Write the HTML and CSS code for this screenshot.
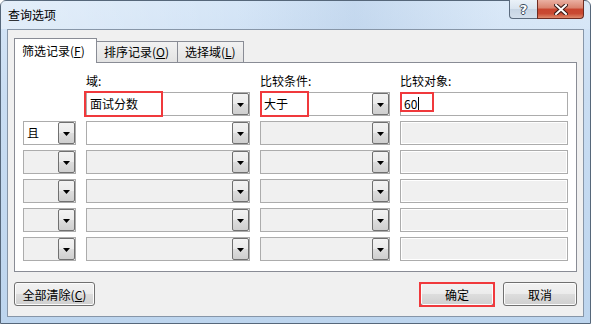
FILE: index.html
```html
<!DOCTYPE html>
<html lang="zh-CN">
<head>
<meta charset="UTF-8" />
<title>查询选项</title>
<link rel="stylesheet" href="styles.css">
</head>
<body>

<div class="window">
  <div class="titlebar">
    <span class="title">查询选项</span>
    <div class="caption-btns">
      <span class="cap-btn help">?</span>
      <span class="cap-btn close">
        <svg width="14" height="11" viewBox="0 0 14 11">
          <path d="M2 1 L12 10 M12 1 L2 10" stroke="#3a1a16" stroke-width="4" stroke-linecap="square"/>
          <path d="M2 1 L12 10 M12 1 L2 10" stroke="#fff" stroke-width="2" stroke-linecap="square"/>
        </svg>
      </span>
    </div>
  </div>

  <div class="client">
    <!-- tabs -->
    <div class="tabs">
      <span class="tab active">筛选记录(<u>F</u>)</span>
      <span class="tab">排序记录(<u>O</u>)</span>
      <span class="tab">选择域(<u>L</u>)</span>
    </div>

    <div class="panel">
      <div class="grid">
        <span></span>
        <span class="lbl">域:</span>
        <span class="lbl">比较条件:</span>
        <span class="lbl">比较对象:</span>

        <!-- row 1 -->
        <span></span>
        <div class="combo">面试分数<span class="dd"></span><span class="mark mark-field"></span></div>
        <div class="combo">大于<span class="dd"></span><span class="mark mark-cond"></span></div>
        <div class="textbox">60<span class="caret"></span><span class="mark mark-value"></span></div>

        <!-- row 2 -->
        <div class="combo">且<span class="dd"></span></div>
        <div class="combo"><span class="dd"></span></div>
        <div class="combo off"><span class="dd"></span></div>
        <div class="textbox off"></div>

        <!-- row 3 -->
        <div class="combo off"><span class="dd"></span></div>
        <div class="combo off"><span class="dd"></span></div>
        <div class="combo off"><span class="dd"></span></div>
        <div class="textbox off"></div>

        <!-- row 4 -->
        <div class="combo off"><span class="dd"></span></div>
        <div class="combo off"><span class="dd"></span></div>
        <div class="combo off"><span class="dd"></span></div>
        <div class="textbox off"></div>

        <!-- row 5 -->
        <div class="combo off"><span class="dd"></span></div>
        <div class="combo off"><span class="dd"></span></div>
        <div class="combo off"><span class="dd"></span></div>
        <div class="textbox off"></div>

        <!-- row 6 -->
        <div class="combo off"><span class="dd"></span></div>
        <div class="combo off"><span class="dd"></span></div>
        <div class="combo off"><span class="dd"></span></div>
        <div class="textbox off"></div>
      </div>
    </div>

    <div class="footer">
      <button class="btn btn-clear">全部清除(<u>C</u>)</button>
      <span class="spacer"></span>
      <button class="btn btn-ok">确定<span class="mark mark-ok"></span></button>
      <button class="btn">取消</button>
    </div>
  </div>
</div>

</body>
</html>
```

FILE: styles.css
```css
:root {
  --mark: #f0393c;
  --edge: #acacac;
  --off: #f0f0f0;
}
body {
  margin: 0;
  width: 591px;
  height: 324px;
  overflow: hidden;
  background: #fff;
  font-family: "Noto Sans CJK SC", "Liberation Sans", sans-serif;
  font-size: 12px;
  color: #000;
}
.window {
  box-sizing: border-box;
  width: 591px;
  height: 324px;
  border: 1px solid #56677a;
  border-radius: 6px 6px 0 0;
  background: linear-gradient(to bottom, #d6e6f7 0%, #c9ddf2 30%, #bdd5ee 100%);
  display: flex;
  flex-direction: column;
}
.titlebar {
  height: 28px;
  display: flex;
  justify-content: space-between;
  background: linear-gradient(to right, rgba(255,255,255,0.35) 0%, rgba(255,255,255,0) 40%, rgba(150,180,215,0.25) 60%, rgba(255,255,255,0.1) 85%);
}
.title {
  padding-left: 7px;
  line-height: 28px;
  font-size: 12px;
}
.caption-btns {
  display: flex;
  margin-right: 6px;
  margin-top: -1px;
}
.cap-btn {
  box-sizing: border-box;
  height: 19px;
  display: flex;
  align-items: center;
  justify-content: center;
  border: 1px solid #5b6b7e;
  border-top: none;
}
.help {
  width: 28px;
  border-radius: 0 0 0 4px;
  border-right: none;
  background: linear-gradient(to bottom, #eaf1f8 0%, #d9e4ef 50%, #c7d5e4 51%, #d3dfec 100%);
  color: #fff;
  font-family: "DejaVu Sans", sans-serif;
  font-weight: bold;
  font-size: 13px;
  text-shadow: 1px 0 0 #3b4a5c, -1px 0 0 #3b4a5c, 0 1px 0 #3b4a5c, 0 -1px 0 #3b4a5c;
}
.close {
  width: 47px;
  border-radius: 0 0 4px 0;
  border-color: #6e2c22;
  background: linear-gradient(to bottom, #eab0a2 0%, #d9826d 45%, #c8452f 50%, #c94a33 75%, #de8a6c 100%);
}
.client {
  flex: 1;
  margin: 0 6px 6px;
  border: 1px solid #8796a8;
  background: #f0f0f0;
  display: flex;
  flex-direction: column;
}
.tabs {
  display: flex;
  align-items: flex-end;
  margin: 8px 0 0 6px;
  height: 24px;
}
.tab {
  box-sizing: border-box;
  height: 21px;
  padding: 0 7px;
  border: 1px solid #898c95;
  border-bottom: none;
  margin-left: -1px;
  background: linear-gradient(to bottom, #f2f2f2, #e3e3e3);
  line-height: 20px;
}
.tab:first-child {
  margin-left: 0;
}
.tab.active {
  height: 25px;
  width: 83px;
  background: #fff;
  position: relative;
  z-index: 1;
  margin-bottom: -1px;
  line-height: 24px;
}
.tab:nth-child(2) { width: 82px; }
.tab:nth-child(3) { width: 67px; }
.panel {
  width: 561px;
  margin-left: 6px;
  border: 1px solid #898c95;
  background: #fff;
}
.grid {
  display: grid;
  grid-template-columns: 53px 164px 130px 168px;
  grid-template-rows: 13px repeat(6, 24px);
  column-gap: 10px;
  row-gap: 5px;
  padding: 11px 0 10px 8px;
}
.lbl {
  line-height: 13px;
}
.combo, .textbox {
  box-sizing: border-box;
  position: relative;
  height: 24px;
  border: 1px solid var(--edge);
  background: #fff;
  padding-left: 3px;
  line-height: 22px;
}
.combo.off, .textbox.off {
  background: var(--off);
}
.textbox.off {
  box-shadow: inset 0 0 0 1px #fff;
}
.dd {
  box-sizing: border-box;
  position: absolute;
  top: 0;
  right: 0;
  bottom: 0;
  width: 17px;
  border: 1px solid #707070;
  border-radius: 2px;
  background: linear-gradient(to bottom, #f3f3f3 0%, #ebebeb 50%, #dddddd 51%, #cfcfcf 100%);
}
.dd::after {
  content: "";
  position: absolute;
  left: 4px;
  top: 9px;
  width: 7px;
  height: 4px;
  background: #000;
  clip-path: polygon(0 0, 100% 0, 50% 100%);
}
.caret {
  display: inline-block;
  width: 1px;
  height: 15px;
  background: #000;
  vertical-align: -3px;
  margin-left: 1px;
}
.mark {
  position: absolute;
  border: 2px solid var(--mark);
  pointer-events: none;
}
.mark-field {
  left: -3px;
  top: -2px;
  width: 75px;
  height: 22px;
}
.mark-cond {
  left: -1px;
  top: -2px;
  width: 45px;
  height: 22px;
}
.mark-value {
  left: -1px;
  top: -1px;
  width: 30px;
  height: 16px;
}
.footer {
  display: flex;
  margin: 10px 6px 0 6px;
}
.spacer {
  flex: 1;
}
.btn {
  box-sizing: border-box;
  position: relative;
  width: 74px;
  height: 24px;
  padding: 0;
  border: 1px solid #707070;
  border-radius: 3px;
  background: linear-gradient(to bottom, #f2f2f2 0%, #ebebeb 50%, #dddddd 51%, #cfcfcf 100%);
  box-shadow: inset 0 0 0 1px #fcfcfc;
  font-family: inherit;
  font-size: 12px;
  color: #000;
}
.btn-clear {
  width: 81px;
}
.btn-ok {
  margin-right: 9px;
}
.mark-ok {
  left: -2px;
  top: -1px;
  right: -2px;
  bottom: -2px;
}
```
